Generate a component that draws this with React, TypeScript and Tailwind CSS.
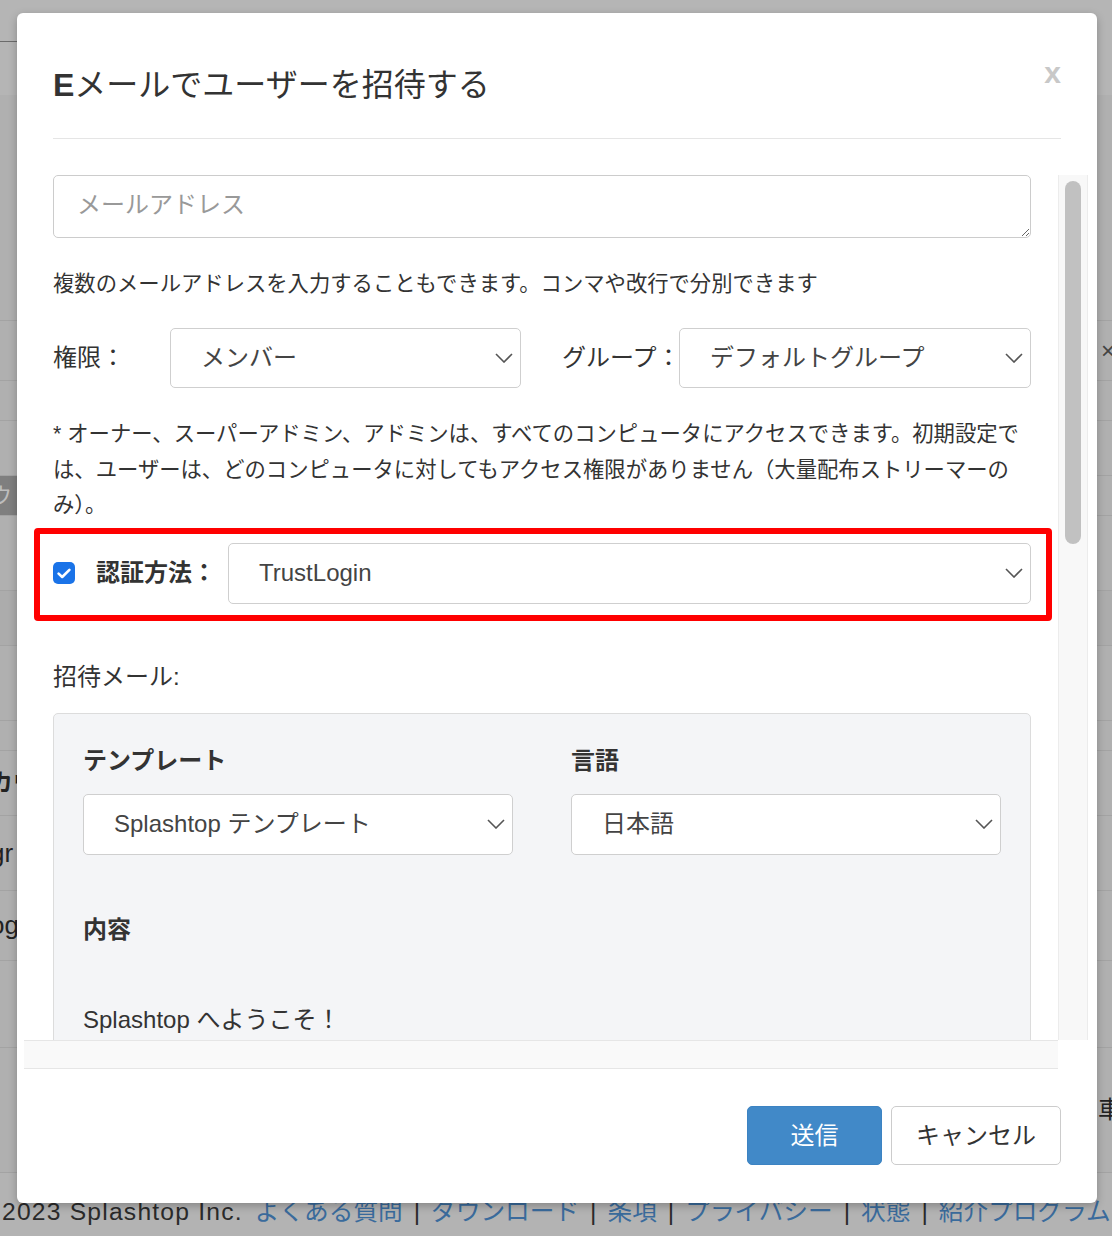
import React from "react";

function Chevron() {
  return (
    <svg width="18" height="10" viewBox="0 0 18 10" className="shrink-0">
      <path d="M1 1l8 8 8-8" fill="none" stroke="#555" strokeWidth="1.6" />
    </svg>
  );
}

function Select({ text, className }: { text: string; className: string }) {
  return (
    <div
      className={
        "flex items-center justify-between rounded-[5px] border border-[#cfcfcf] bg-white pl-[30px] pr-[7px] text-[24px] text-[#444] " +
        className
      }
    >
      <span className="whitespace-nowrap">{text}</span>
      <Chevron />
    </div>
  );
}

function Sep() {
  return <span className="mx-[11px] text-[#2a2a2a]">|</span>;
}

function Background() {
  return (
    <div className="flex flex-col">
      <div className="h-[95px] bg-[#b5b5b5]">
        <div className="h-[42px] w-[60px] border-b border-[#6b6b6b]" />
      </div>
      <div className="flex flex-col bg-[#b0b0b0]">
        <div className="h-[225px]" />
        <div className="flex h-[60px] items-center justify-end border-t border-[#a3a3a3] text-[24px] text-[#444]">
          <span className="mr-[-3px]">×</span>
        </div>
        <div className="h-[40px] border-t border-[#a3a3a3]" />
        <div className="h-[55px] border-t border-[#a3a3a3]" />
        <div className="flex h-[40px] items-center border-t border-[#a3a3a3]">
          <div className="flex h-full w-[40px] items-center bg-[#7f7f7f] text-[22px] text-[#bdbdbd]">
            <span className="ml-[-10px]">ウ</span>
          </div>
        </div>
        <div className="h-[75px] border-t border-[#a3a3a3]" />
        <div className="h-[55px] border-t border-[#a3a3a3] bg-[#acacac]" />
        <div className="h-[75px] border-t border-[#a3a3a3]" />
        <div className="h-[30px] border-t border-[#a3a3a3]" />
        <div className="flex h-[65px] items-center border-t border-[#a3a3a3] text-[24px] font-bold text-[#222]">
          <span className="ml-[-11px] whitespace-nowrap">カウ</span>
        </div>
        <div className="flex h-[75px] items-center border-t border-[#a3a3a3] text-[26px] text-[#222]">
          <span className="ml-[-10px]">gr</span>
        </div>
        <div className="flex h-[70px] items-center border-t border-[#a3a3a3] text-[26px] text-[#222]">
          <span className="ml-[-10px]">og</span>
        </div>
        <div className="h-[87px] border-t border-[#a3a3a3]" />
        <div className="flex h-[125px] items-center justify-end border-t border-[#a3a3a3] text-[24px] text-[#222]">
          <span className="mr-[-10px]">車</span>
        </div>
      </div>
      <div className="h-[64px] border-t border-[#a3a3a3] bg-[#b3b3b3] pl-[2px] pt-[22px] text-[24.67px] leading-[34px] whitespace-nowrap text-[#2a2a2a]">
        <span className="tracking-[1.2px]">2023 Splashtop Inc.</span>
        <span className="ml-[12px] text-[#3a6b9c]">よくある質問</span>
        <Sep />
        <span className="text-[#3a6b9c]">ダウンロード</span>
        <Sep />
        <span className="text-[#3a6b9c]">条項</span>
        <Sep />
        <span className="text-[#3a6b9c]">プライバシー</span>
        <Sep />
        <span className="text-[#3a6b9c]">状態</span>
        <Sep />
        <span className="text-[#3a6b9c]">紹介プログラム</span>
      </div>
    </div>
  );
}

export default function App() {
  return (
    <div className="relative h-[1236px] w-full overflow-hidden bg-[#b3b3b3] font-['Liberation_Sans','Noto_Sans_CJK_JP',sans-serif] text-[#333]">
      <Background />
      <div className="absolute left-[17px] top-[13px] flex h-[1190px] w-[1080px] flex-col rounded-[6px] bg-white shadow-[0_3px_9px_rgba(0,0,0,0.25)]">
        {/* Header */}
        <div className="mx-[36px] flex items-start justify-between border-b border-[#e5e5e5] pb-[30px] pt-[50px]">
          <h1 className="text-[32px] font-normal leading-[45px] text-[#333]">
            <span className="font-bold">E</span>メールでユーザーを招待する
          </h1>
          <span className="mt-[-13px] text-[30px] font-bold leading-[45px] text-[#c8c8c8]">x</span>
        </div>

        {/* Scroll area */}
        <div className="ml-[7px] mt-[36px] grid h-[894px] w-[1064px] grid-cols-[1034px_30px] grid-rows-[865px_29px]">
          <div className="overflow-hidden bg-white pl-[29px] pr-[27px]">
            <textarea
              placeholder="メールアドレス"
              className="block h-[63px] w-full resize-y rounded-[5px] border border-[#cccccc] px-[23px] py-[12px] text-[24px] leading-[34px] text-[#333] outline-none placeholder:text-[#999]"
            />
            <p className="mt-[31px] text-[21.33px] leading-[30px] text-[#333]">
              複数のメールアドレスを入力することもできます。コンマや改行で分別できます
            </p>

            <div className="mt-[29px] flex h-[60px] items-center">
              <span className="w-[117px] shrink-0 text-[24px] text-[#333]">権限：</span>
              <Select text="メンバー" className="h-[60px] w-[351px] shrink-0" />
              <span className="ml-[41px] w-[117px] shrink-0 whitespace-nowrap text-[24px] text-[#333]">グループ：</span>
              <Select text="デフォルトグループ" className="h-[60px] flex-1" />
            </div>

            <p className="mt-[29px] text-[21.33px] leading-[35.5px] text-[#333]">
              * オーナー、スーパーアドミン、アドミンは、すべてのコンピュータにアクセスできます。初期設定では、ユーザーは、どのコンピュータに対してもアクセス権限がありません（大量配布ストリーマーのみ）。
            </p>

            <div className="ml-[-19px] mr-[-21px] mt-[4px] flex items-center rounded-[4px] border-[6px] border-[#ff0000] pb-[11px] pl-[13px] pr-[15px] pt-[9px]">
              <div className="flex h-[22px] w-[22px] shrink-0 items-center justify-center rounded-[5px] bg-[#1a73e8]">
                <svg width="14" height="11" viewBox="0 0 14 11">
                  <path
                    d="M1.6 5.6L5.2 9L12.4 1.8"
                    fill="none"
                    stroke="white"
                    strokeWidth="2.6"
                    strokeLinecap="round"
                    strokeLinejoin="round"
                  />
                </svg>
              </div>
              <span className="ml-[21px] shrink-0 whitespace-nowrap text-[24px] font-bold text-[#333]">認証方法：</span>
              <Select text="TrustLogin" className="ml-[12px] h-[61px] flex-1" />
            </div>

            <p className="mt-[39px] text-[24px] leading-[34px] text-[#333]">招待メール:</p>

            <div className="mt-[19px] rounded-[5px] border border-[#dcdcdc] bg-[#f4f5f7] px-[29px] pb-[40px] pt-[30px]">
              <div className="grid grid-cols-2 gap-x-[58px]">
                <div>
                  <p className="text-[24px] font-bold leading-[34px] text-[#333]">テンプレート</p>
                  <Select text="Splashtop テンプレート" className="mt-[16px] h-[61px]" />
                </div>
                <div>
                  <p className="text-[24px] font-bold leading-[34px] text-[#333]">言語</p>
                  <Select text="日本語" className="mt-[16px] h-[61px]" />
                </div>
              </div>
              <p className="mt-[58px] text-[24px] font-bold leading-[34px] text-[#333]">内容</p>
              <p className="mt-[56px] text-[24px] leading-[34px] text-[#333]">Splashtop へようこそ！</p>
              <p className="mt-[30px] text-[24px] leading-[34px] text-[#333]">
                Splashtop アカウントへの招待が届いています。
              </p>
            </div>
          </div>

          {/* vertical scrollbar */}
          <div className="flex justify-center border-x border-[#ececec] bg-[#f8f8f8] pt-[6px]">
            <div className="h-[363px] w-[16px] rounded-full bg-[#c1c1c1]" />
          </div>

          {/* horizontal scrollbar track */}
          <div className="border-y border-[#e6e6e6] bg-[#f9f9f9]" />
          <div className="bg-white" />
        </div>

        {/* Footer */}
        <div className="flex justify-end gap-[9px] pb-[38px] pr-[36px] pt-[37px]">
          <button className="h-[59px] w-[135px] rounded-[5px] border border-[#3c83c2] bg-[#4189c8] text-[24px] text-white">
            送信
          </button>
          <button className="h-[59px] w-[170px] rounded-[5px] border border-[#cccccc] bg-white text-[24px] text-[#333]">
            キャンセル
          </button>
        </div>
      </div>
    </div>
  );
}
